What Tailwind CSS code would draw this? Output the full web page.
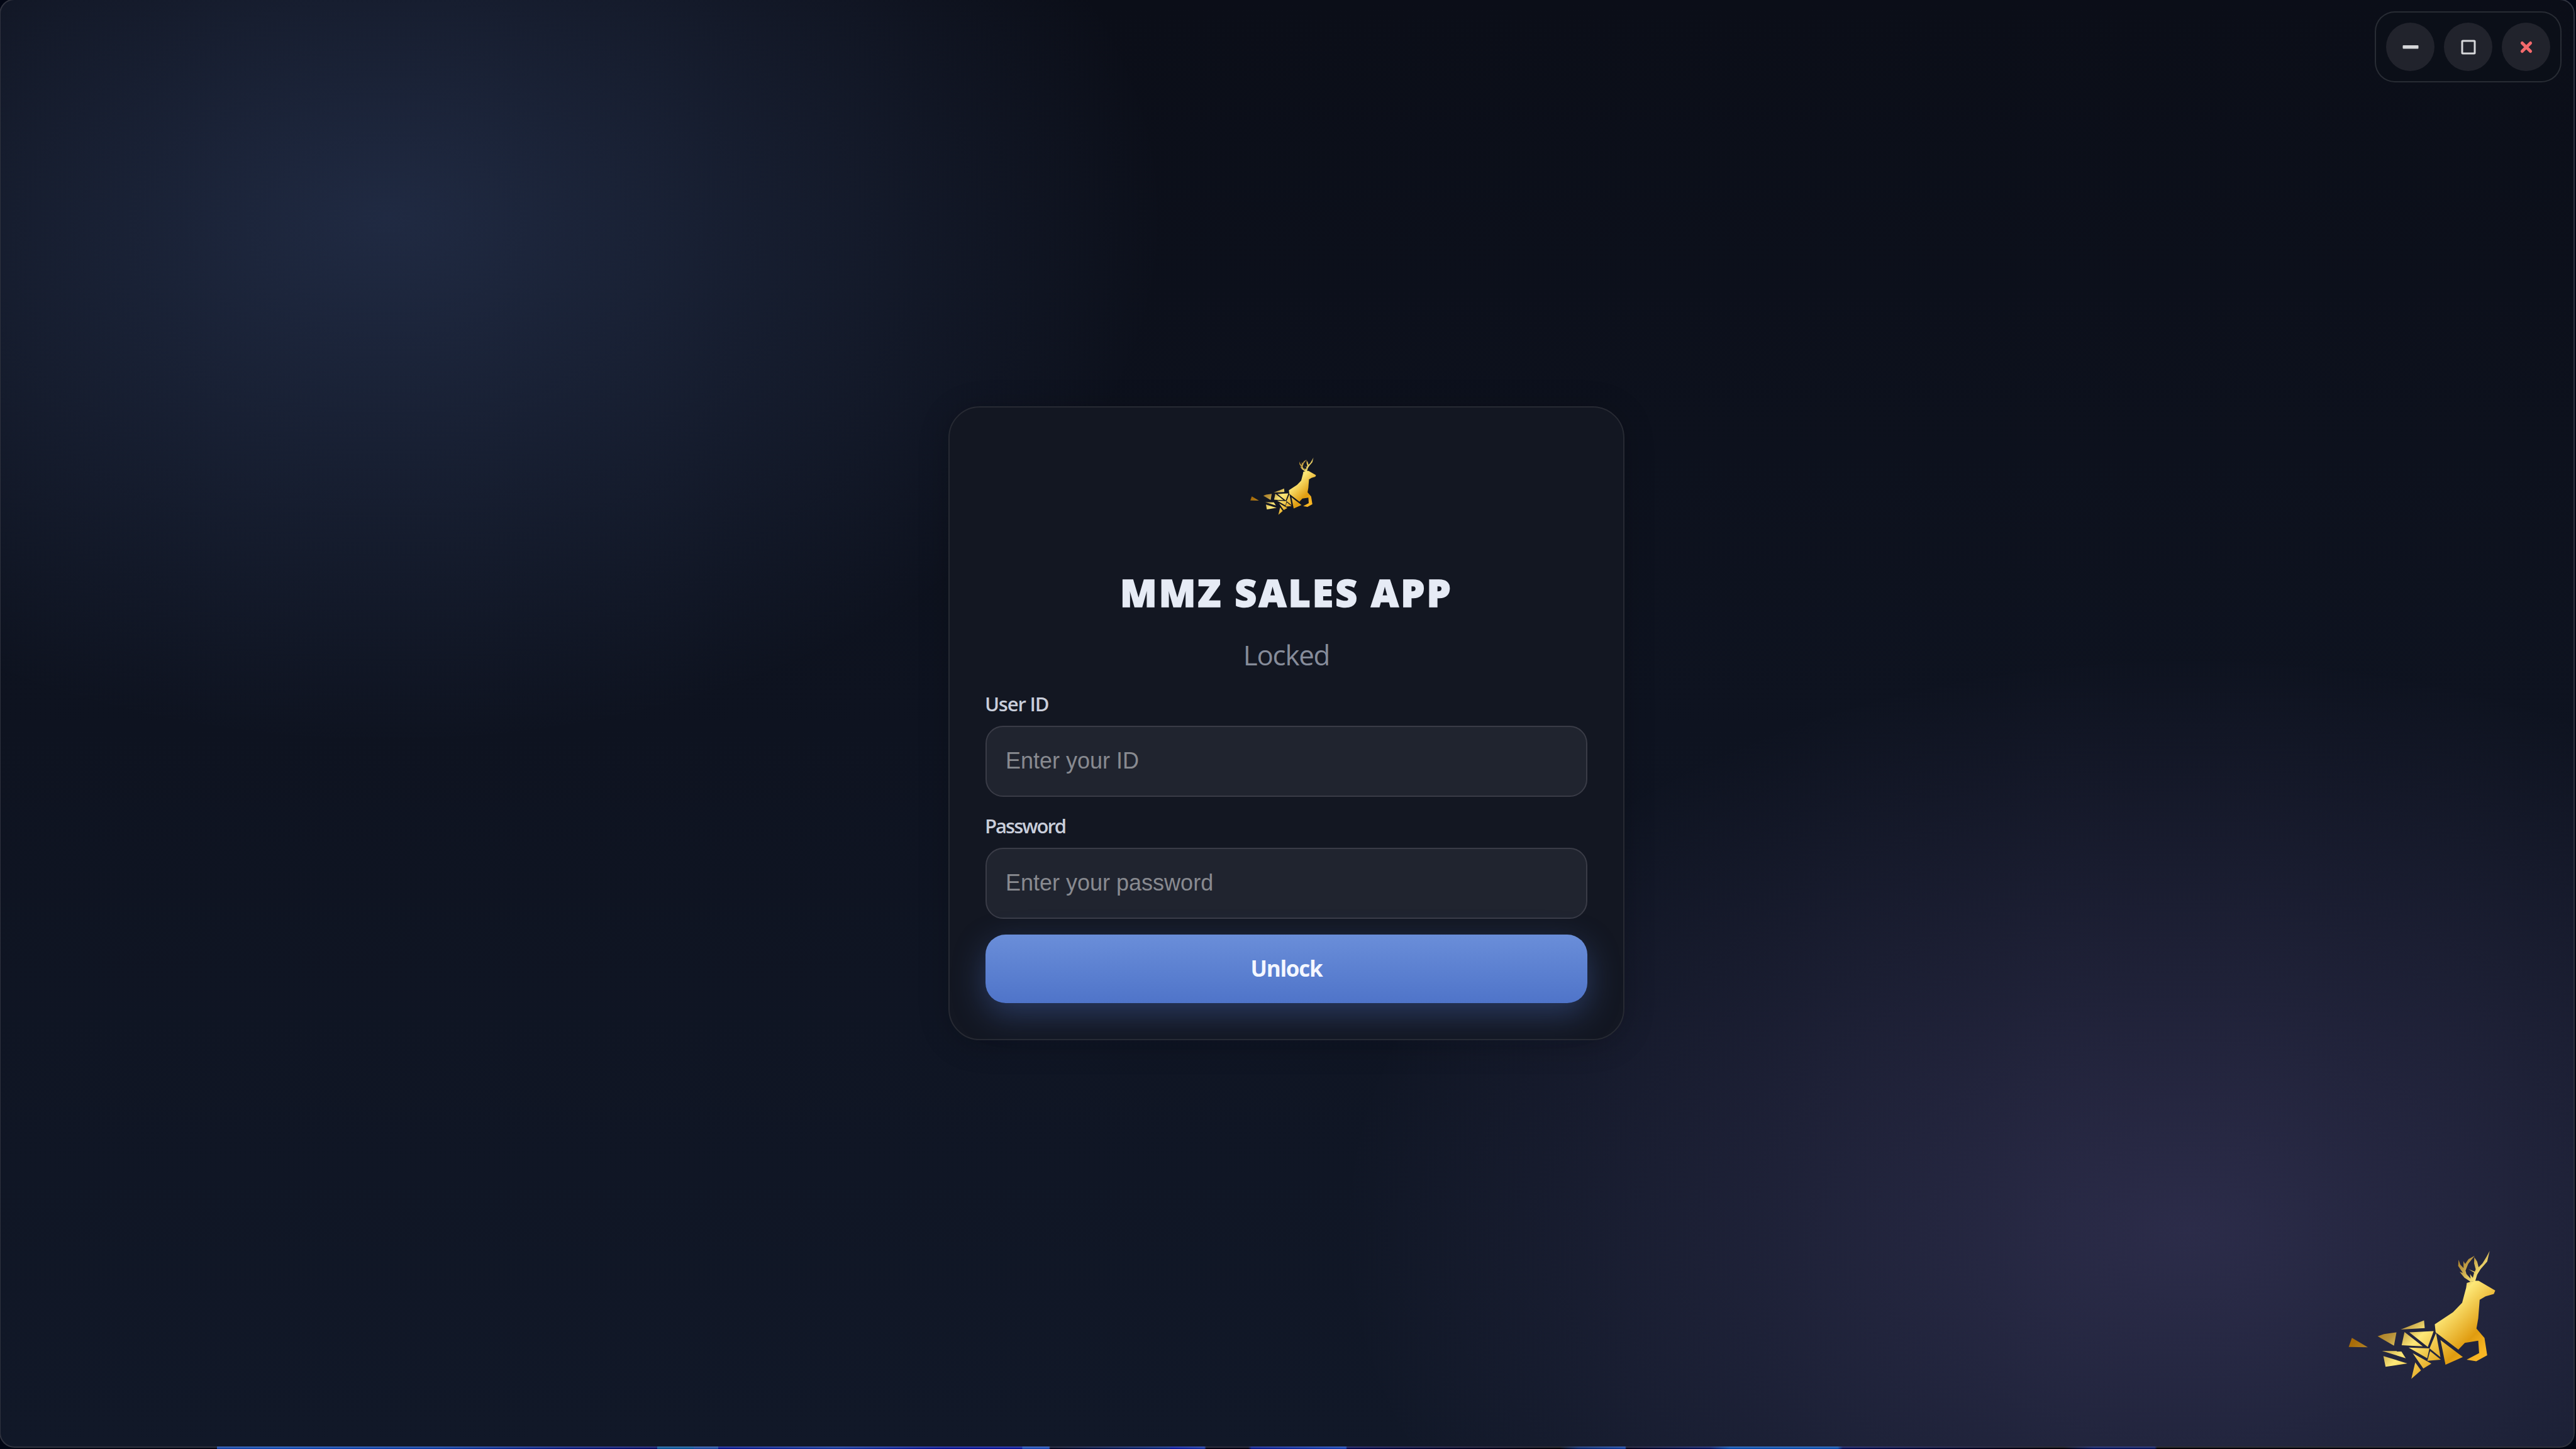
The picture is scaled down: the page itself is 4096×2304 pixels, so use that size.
<!DOCTYPE html>
<html lang="en">

<head>
  <meta charset="UTF-8" />
  <meta name="viewport" content="width=device-width, initial-scale=1.0" />
  <script src="https://cdn.jsdelivr.net/npm/@tailwindcss/browser@4"></script>
  <title>MMZ Sales App</title>
</head>

<body class="bg-[#020614] overflow-hidden font-['Open_Sans','Noto_Sans',sans-serif]">
  <div class="relative w-[4096px] h-[2304px] overflow-hidden">
    <!-- desktop showing under the window -->
    <div
      class="absolute left-0 bottom-0 w-full h-[4px] bg-[linear-gradient(90deg,#020614_345px,#1444a4_345px,#0e48b0_450px,#0a3aa0_700px,#06187c_900px,#040c64_1045px,#0a5498_1045px,#0a5498_1103px,#1c4aa0_1103px,#1c4aa0_1142px,#04148a_1142px,#12349a_1330px,#041090_1500px,#061498_1625px,#1a48b4_1626px,#1a48b4_1668px,#02061e_1670px,#062480_1860px,#06169a_1862px,#1230a0_1915px,#000214_1918px,#000214_1985px,#06188a_1990px,#123eb0_2140px,#040850_2142px,#020322_2330px,#000008_2480px,#062468_2510px,#0e3c9c_2584px,#02021c_2586px,#041460_2720px,#084cac_2750px,#084cac_2922px,#040c54_2930px,#010218_3180px,#000008_3280px,#06145c_3330px,#06145c_3426px,#000106_3430px,#020410_100%)]">
    </div>

    <div
      class="relative flex justify-center items-center w-[4095px] h-[2304px] -mt-[2px] -ml-[1px] pr-[2px] pb-[1px] rounded-[24px] border-2 border-white/18 bg-clip-padding bg-[radial-gradient(1240px_840px_at_15%_15%,rgba(122,162,247,0.18),transparent),radial-gradient(1350px_915px_at_85%_85%,rgba(180,150,250,0.17),transparent),linear-gradient(180deg,#0b0e18,#111828)]">

      <!-- window controls -->
      <div
        class="absolute right-[19px] top-[18px] flex items-center gap-[15px] h-[113px] px-4 border-2 border-white/12 rounded-[32px] bg-[#0b0f18]">
        <button class="flex justify-center items-center size-[77px] rounded-full bg-[#21232c]">
          <svg class="w-[26px] h-[26px]" viewBox="0 0 26 26">
            <rect x="0.5" y="10" width="25" height="5.6" rx="1" fill="#d6d7da" />
          </svg>
        </button>
        <button class="flex justify-center items-center size-[77px] rounded-full bg-[#21232c]">
          <svg class="w-[26px] h-[26px]" viewBox="0 0 26 26" fill="none" stroke="#d6d7da" stroke-width="3">
            <rect x="3" y="3" width="20" height="20" rx="1" />
          </svg>
        </button>
        <button class="flex justify-center items-center size-[77px] rounded-full bg-[#21232c]">
          <svg class="w-[26px] h-[26px]" viewBox="0 0 26 26" fill="none" stroke="#f46a6c" stroke-width="5"
            stroke-linecap="round">
            <path d="M6.4 6.4L19.6 19.6M19.6 6.4L6.4 19.6" />
          </svg>
        </button>
      </div>

      <!-- login card -->
      <form
        class="flex flex-col w-[1075px] h-[1008px] px-[57px] pt-[79px] rounded-[50px] border-2 border-[#272a33] bg-[#131722] shadow-[0_6px_50px_rgba(0,0,0,0.2)]">
        <svg class="self-center shrink-0 mr-[11px] w-[107px] h-[93px]" viewBox="100 90 840 730">
          <use href="#deer" />
        </svg>
        <h1
          class="mt-[82px] h-20 leading-[80px] text-center text-[60.6px] font-extrabold tracking-[3.1px] text-[#e6ebf5] whitespace-nowrap [-webkit-text-stroke:1.5px_#e6ebf5]">
          MMZ SALES APP</h1>
        <p class="mt-[29px] h-[60px] leading-[60px] text-center text-[43.8px] tracking-[-1.2px] text-[#868c9a]">Locked</p>

        <label for="uid"
          class="mt-[26px] -ml-[1px] h-[44px] leading-[44px] text-[31px] font-semibold tracking-[-1.2px] text-[#c9cedb]">User ID</label>
        <input id="uid" type="text" placeholder="Enter your ID"
          class="mt-[13px] h-[113px] shrink-0 pl-[30px] rounded-[28px] border-2 border-[#3a3c47] bg-[#20242f] font-['Liberation_Sans',Arial,sans-serif] text-[36px] placeholder:text-[#888a90]" />

        <label for="pwd"
          class="mt-[24px] -ml-[1px] h-[44px] leading-[44px] text-[31px] font-semibold tracking-[-2px] text-[#c9cedb]">Password</label>
        <input id="pwd" type="password" placeholder="Enter your password"
          class="mt-[13px] h-[113px] shrink-0 pl-[30px] rounded-[28px] border-2 border-[#3a3c47] bg-[#20242f] font-['Liberation_Sans',Arial,sans-serif] text-[36px] placeholder:text-[#888a90]" />

        <button type="button"
          class="mt-[25px] h-[109px] shrink-0 rounded-[32px] bg-linear-to-b from-[#6a8ed9] to-[#4f74c9] shadow-[0_17px_51px_rgba(79,116,201,0.38)] text-[35px] font-bold tracking-[-1.25px] text-[#f4f7ff]">Unlock</button>
      </form>
    </div>

    <!-- watermark -->
    <svg class="absolute left-[3732px] top-[1988px] w-[239px] h-[208px]" viewBox="100 90 840 730">
      <defs>
        <linearGradient id="gold" gradientUnits="userSpaceOnUse" x1="370" y1="370" x2="755" y2="755">
          <stop offset="0" stop-color="#a86c08" />
          <stop offset="0.234" stop-color="#b8933c" />
          <stop offset="0.44" stop-color="#fde878" />
          <stop offset="0.82" stop-color="#e09c10" />
          <stop offset="1" stop-color="#f8b624" />
        </linearGradient>
        <g id="deer" fill="url(#gold)">
          <!-- body, head and front leg -->
          <path
            d="M769 272L790 265L816 260H835L928 314L920 334L874 347L841 366L833 470L823 527L868 580L883 676L822 710L768 701L838 664L833 595L758 607L722 645L595 548L590 503L692 436L743 383L765 300Z" />
          <!-- antlers -->
          <path
            d="M790 265L756 243L729 210L747 216L721 177L723 142L733 170L751 189L750 150L760 166L779 139L813 120L777 165L762 203L767 222L790 248L787 222L803 243L810 214L778 195L814 209L819 196L810 162L811 128L827 153L835 184L857 162L879 126L897 93L883 153L846 195L827 226L816 262Z" />
          <!-- shards -->
          <path d="M127 579L216 632L109 630Z" />
          <path d="M271 570L306 558L376 548L362 623Z" />
          <path d="M400 532L530 481L534 524Z" />
          <path d="M421 546L523 626L405 620Z" />
          <path d="M448 548L584 541L551 630Z" />
          <path d="M444 633L560 638L548 693Z" />
          <path d="M597 552L622 687L561 638Z" />
          <path d="M564 653L624 701L549 707Z" />
          <path d="M622 591L747 686L650 729Z" />
          <path d="M295 652L402 653L428 693Z" />
          <path d="M303 681L437 722L315 741Z" />
          <path d="M467 665L571 723L526 750Z" />
          <path d="M481 716L513 761L459 808Z" />
        </g>
      </defs>
      <use href="#deer" />
    </svg>
  </div>
</body>

</html>
